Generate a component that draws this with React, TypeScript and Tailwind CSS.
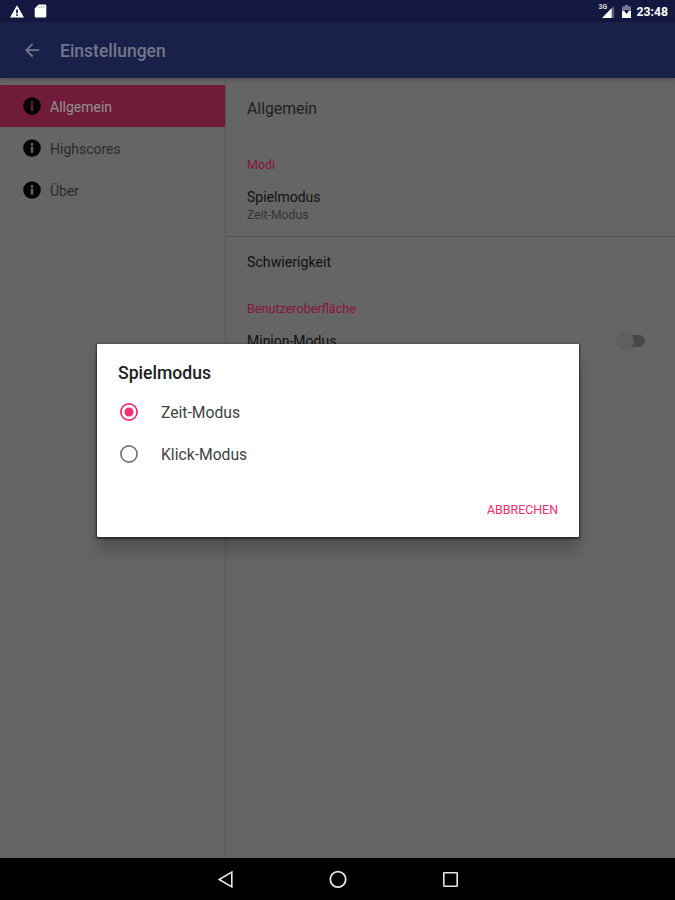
const sections = [
    { id: 1, name: "Allgemein", active: true },
    { id: 2, name: "Highscores", active: false },
    { id: 3, name: "Über", active: false },
];

const modes = [
    { id: 1, name: "Zeit-Modus", selected: true },
    { id: 2, name: "Klick-Modus", selected: false },
];

function StatusBar() {
    return (
        <div className="h-[22px] shrink-0 bg-[#141840] flex items-center text-white">
            <svg className="ml-[10px]" width="14" height="13" viewBox="0 0 14 13">
                <path d="M7 0.2L14 12.5H0Z" fill="#fff" />
                <path d="M6.1 4.4h1.8v3.8H6.1zM6.1 9.2h1.8v1.6H6.1z" fill="#141840" />
            </svg>
            <svg className="ml-[10px]" width="13" height="14" viewBox="0 0 13 14">
                <path d="M4.6 0.5H11a1.3 1.3 0 0 1 1.3 1.3v10.4a1.3 1.3 0 0 1-1.3 1.3H2a1.3 1.3 0 0 1-1.3-1.3V4.5Z" fill="#fff" />
                <path d="M5 2v2M7.4 2v2M9.8 2v2" stroke="#b9bac6" strokeWidth="1.2" />
            </svg>
            <div className="ml-auto flex items-center">
                <div className="relative w-4 h-[14px]">
                    <svg className="absolute left-[3px] top-[2px]" width="13" height="13" viewBox="0 0 13 13">
                        <path d="M12.2 0V12H9.7V2.5Z" fill="#5d607c" />
                        <path d="M0 12L9.7 2V12Z" fill="#fff" />
                    </svg>
                    <span className="absolute left-0 top-0 text-[7px] leading-[7px] font-bold text-[#d5d6df]">3G</span>
                </div>
                <svg className="ml-[7px] mt-px" width="9" height="13" viewBox="0 0 9 13">
                    <path d="M2.8 0h3.4v1.4H9v5H0v-5h2.8Z" fill="#777a91" />
                    <path d="M0 6h9V13H0Z" fill="#fff" />
                    <path d="M2.6 5h3.8v1.6L4.5 9L2.6 6.6Z" fill="#141840" />
                </svg>
                <span className="ml-[6px] mr-[7px] pt-px text-[12.2px] leading-[22px] font-bold">23:48</span>
            </div>
        </div>
    );
}

function Toolbar() {
    return (
        <header className="relative z-10 h-14 shrink-0 bg-[#192049] flex items-center shadow-[0_2px_4px_rgba(0,0,0,0.2)]">
            <svg className="ml-[25px]" width="15" height="15" viewBox="0 0 15 15" fill="none" stroke="#73778a" strokeWidth="1.8">
                <path d="M14.2 7.2H1.5M7.6 0.9L1.3 7.2L7.6 13.5" />
            </svg>
            <h1 className="ml-5 pt-px text-[17.5px] leading-6 font-medium text-[#73778a]">Einstellungen</h1>
        </header>
    );
}

function InfoIcon({ active }: { active: boolean }) {
    return (
        <svg width="18" height="18" viewBox="0 0 18 18">
            <circle cx="9" cy="9" r="8.8" fill="#050505" />
            <path d="M7.8 4h2.4v2.4H7.8zM7.8 7.4h2.4v6.4H7.8z" fill={active ? "#701c3b" : "#656565"} />
        </svg>
    );
}

function Sidebar() {
    return (
        <nav className="w-[226px] shrink-0 pt-[7px] border-r border-[#575757]">
            {sections.map((section) => (
                <div
                    key={section.id}
                    className={`h-[42px] pl-[23px] flex items-center gap-[9px] text-[14px] ${section.active ? "bg-[#711b3a] text-[#929292]" : "text-[#2b2b2b]"}`}
                >
                    <InfoIcon active={section.active} />
                    <span className="pt-0.5">{section.name}</span>
                </div>
            ))}
        </nav>
    );
}

function Preferences() {
    return (
        <main className="flex-1">
            <h2 className="pl-[21px] pt-[19px] text-[15.8px] leading-6 text-[#202020]">Allgemein</h2>
            <h3 className="pl-[21px] mt-9 text-[12.5px] leading-4 text-[#8b1339]">Modi</h3>
            <div className="pl-[21px] mt-[14px] h-[50px] border-b border-[#525252]">
                <p className="text-[14px] leading-5 text-[#111111]">Spielmodus</p>
                <p className="text-[12.2px] leading-4 text-[#353535]">Zeit-Modus</p>
            </div>
            <p className="pl-[21px] mt-[15px] text-[14.2px] leading-5 text-[#111111]">Schwierigkeit</p>
            <h3 className="pl-[21px] mt-[29px] text-[12.6px] leading-4 text-[#8b1339]">Benutzeroberfläche</h3>
            <div className="pl-[21px] pr-[30px] mt-[14px] h-5 flex items-center justify-between">
                <span className="text-[14px] leading-5 text-[#111111]">Minion-Modus</span>
                <div className="relative w-[29px] h-5">
                    <div className="absolute right-0 top-[4px] w-[24px] h-[12px] rounded-full bg-[#474747]" />
                    <div className="absolute left-0 top-px size-[18px] rounded-full bg-[#5f5f5f]" />
                </div>
            </div>
        </main>
    );
}

function ModeDialog() {
    return (
        <div role="dialog" className="w-[482px] h-[193px] bg-white rounded-[1px] flex flex-col shadow-[0_1px_2px_1px_rgba(0,0,0,0.5),0_13px_16px_0_rgba(0,0,0,0.22)]">
            <h2 className="pl-[21px] pt-[17px] text-[17.6px] leading-6 font-medium text-[#212121]">Spielmodus</h2>
            <div className="mt-[6px]">
                {modes.map((mode) => (
                    <div key={mode.id} className="h-[42px] pl-[22px] flex items-center gap-[22px]">
                        <svg width="20" height="20" viewBox="0 0 20 20">
                            <circle cx="10" cy="10" r="8.1" fill="none" strokeWidth="1.7" stroke={mode.selected ? "#f02e70" : "#757575"} />
                            {mode.selected && <circle cx="10" cy="10" r="4.5" fill="#f02e70" />}
                        </svg>
                        <span className="pt-0.5 text-[15.7px] text-[#424242]">{mode.name}</span>
                    </div>
                ))}
            </div>
            <button className="mt-[27px] mr-[21px] self-end text-[12.4px] leading-4 text-[#f02e70]">ABBRECHEN</button>
        </div>
    );
}

function NavigationBar() {
    return (
        <footer className="h-[42px] shrink-0 bg-black flex items-center justify-center gap-[94px]">
            <svg width="18" height="18" viewBox="0 0 18 18" fill="none" stroke="#e6e6e6" strokeWidth="1.6">
                <path d="M14.8 2.1V16.9L2.2 9.5Z" />
            </svg>
            <svg width="18" height="18" viewBox="0 0 18 18" fill="none" stroke="#e6e6e6" strokeWidth="1.8">
                <circle cx="9" cy="9.4" r="7.7" />
            </svg>
            <svg width="18" height="18" viewBox="0 0 18 18" fill="none" stroke="#e6e6e6" strokeWidth="1.6">
                <rect x="2.8" y="2.8" width="13.4" height="13.4" rx="0.5" />
            </svg>
        </footer>
    );
}

export default function App() {
    return (
        <div className="relative w-[675px] h-[900px] overflow-hidden bg-[#656565] flex flex-col font-['Roboto',sans-serif]">
            <StatusBar />
            <Toolbar />
            <div className="flex-1 flex">
                <Sidebar />
                <Preferences />
            </div>
            <NavigationBar />
            <div className="absolute left-[97px] top-[343.5px] z-20">
                <ModeDialog />
            </div>
        </div>
    );
}
